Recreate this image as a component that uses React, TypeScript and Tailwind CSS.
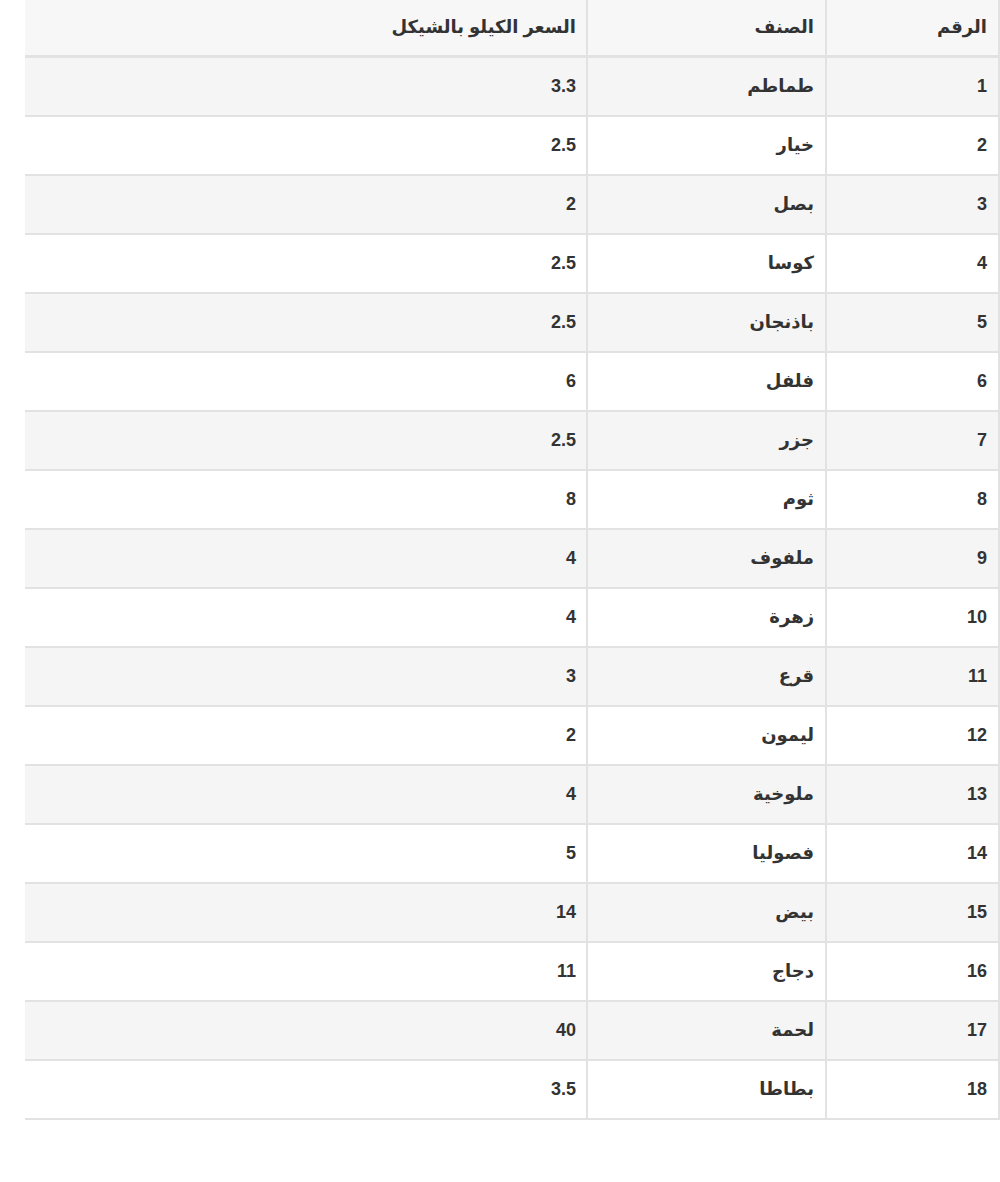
import React from "react";

const rows: [string, string, string][] = [
  ["1", "طماطم", "3.3"],
  ["2", "خيار", "2.5"],
  ["3", "بصل", "2"],
  ["4", "كوسا", "2.5"],
  ["5", "باذنجان", "2.5"],
  ["6", "فلفل", "6"],
  ["7", "جزر", "2.5"],
  ["8", "ثوم", "8"],
  ["9", "ملفوف", "4"],
  ["10", "زهرة", "4"],
  ["11", "قرع", "3"],
  ["12", "ليمون", "2"],
  ["13", "ملوخية", "4"],
  ["14", "فصوليا", "5"],
  ["15", "بيض", "14"],
  ["16", "دجاج", "11"],
  ["17", "لحمة", "40"],
  ["18", "بطاطا", "3.5"],
];

export default function App() {
  return (
    <div className="w-[1000px] h-[1182px] bg-white" style={{ fontFamily: '"Liberation Sans", "DejaVu Sans", sans-serif' }}>
      <div className="ml-[25px] w-[975px]">
        <table dir="rtl" className="w-full border-separate border-spacing-0 text-[18px] font-bold text-[#333]">
          <thead>
            <tr className="h-[58px] bg-[#f7f7f7]">
              <th className="w-[175px] text-right px-[11px] border-b-[3px] border-l-2 border-r-2 border-[#e2e2e2]">الرقم</th>
              <th className="w-[239px] text-right px-[11px] border-b-[3px] border-l-2 border-[#e2e2e2]">الصنف</th>
              <th className="text-right px-[10px] border-b-[3px] border-[#e2e2e2]">السعر الكيلو بالشيكل</th>
            </tr>
          </thead>
          <tbody>
            {rows.map((r, i) => (
              <tr key={r[0]} className={i % 2 === 0 ? "h-[59px] bg-[#f5f5f5]" : "h-[59px] bg-white"}>
                <td className="text-right px-[11px] border-b-2 border-l-2 border-r-2 border-[#e2e2e2]">{r[0]}</td>
                <td className="text-right px-[11px] border-b-2 border-l-2 border-[#e2e2e2]">{r[1]}</td>
                <td className="text-right px-[10px] border-b-2 border-[#e2e2e2]">{r[2]}</td>
              </tr>
            ))}
          </tbody>
        </table>
      </div>
    </div>
  );
}
